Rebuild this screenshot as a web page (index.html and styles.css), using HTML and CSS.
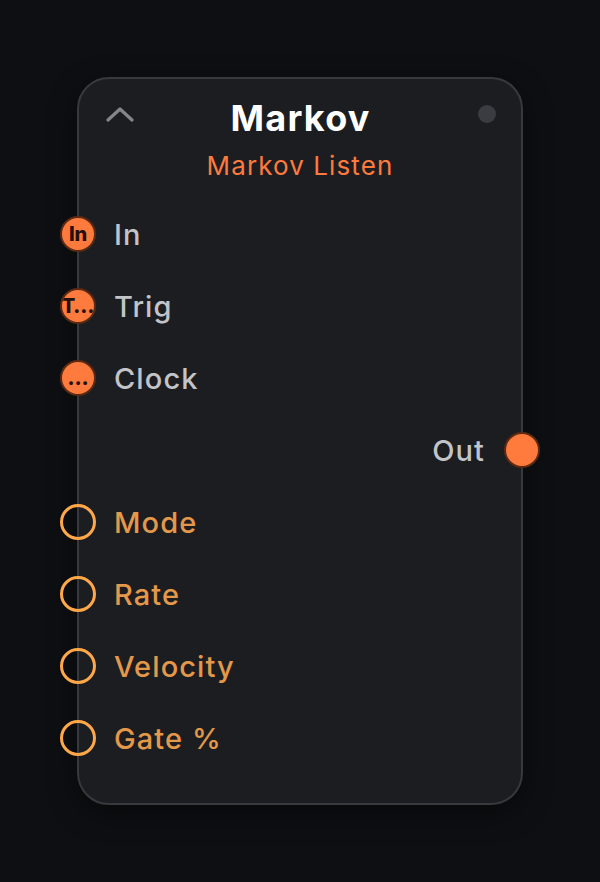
FILE: index.html
```html
<!DOCTYPE html>
<html lang="en">
<head>
  <meta charset="UTF-8" />
  <meta name="viewport" content="width=device-width, initial-scale=1.0" />
  <title>Markov</title>
  <link rel="stylesheet" href="styles.css">
</head>
<body>
  <div class="node">
    <div class="node-head">
      <span class="collapse">
        <svg width="28" height="16" viewBox="0 0 28 16">
          <polyline points="2,13 14,2 26,13" fill="none" stroke="#85868b" stroke-width="3.2" stroke-linecap="round" stroke-linejoin="round" />
        </svg>
      </span>
      <h1 class="title">Markov</h1>
      <span class="status"></span>
    </div>
    <div class="subtitle">Markov Listen</div>

    <div class="ports">
      <div class="row">
        <span class="port in">In</span>
        <span class="label">In</span>
      </div>
      <div class="row">
        <span class="port in">T…</span>
        <span class="label">Trig</span>
      </div>
      <div class="row">
        <span class="port in">…</span>
        <span class="label">Clock</span>
      </div>
      <div class="row out">
        <span class="label">Out</span>
        <span class="port output"></span>
      </div>
      <div class="row">
        <span class="port param"></span>
        <span class="label param-label">Mode</span>
      </div>
      <div class="row">
        <span class="port param"></span>
        <span class="label param-label">Rate</span>
      </div>
      <div class="row">
        <span class="port param"></span>
        <span class="label param-label">Velocity</span>
      </div>
      <div class="row">
        <span class="port param"></span>
        <span class="label param-label">Gate %</span>
      </div>
    </div>
  </div>
</body>
</html>
```

FILE: styles.css
```css
body {
  margin: 0;
  padding: 77px 0 0 77px;
  background-color: #0e0f12;
  font-family: Inter, "Noto Sans", sans-serif;
  height: 882px;
  box-sizing: border-box;
  overflow: hidden;
}
.node {
  width: 446px;
  height: 728px;
  box-sizing: border-box;
  background-color: #1c1d21;
  border: 2px solid #38393e;
  border-radius: 32px;
  box-shadow: 0 8px 30px rgba(0, 0, 0, 0.45);
  padding-top: 17px;
}
.node-head {
  display: grid;
  grid-template-columns: 1fr auto 1fr;
  align-items: center;
  height: 44px;
}
.collapse {
  padding-left: 27px;
  display: flex;
  align-items: center;
  margin-top: -6px;
}
.title {
  margin: 0;
  font-size: 36px;
  line-height: 44px;
  font-weight: 700;
  color: #ffffff;
  letter-spacing: 1.2px;
  margin-right: -1.2px;
}
.status {
  justify-self: end;
  width: 18px;
  height: 18px;
  border-radius: 50%;
  background-color: #3b3c41;
  margin-right: 25px;
  margin-top: -8px;
}
.subtitle {
  text-align: center;
  margin-top: 10px;
  font-size: 26px;
  line-height: 32px;
  color: #ff7a3d;
  letter-spacing: 1.1px;
}
.ports {
  margin-top: 16px;
}
.row {
  display: flex;
  align-items: center;
  height: 72px;
  gap: 18px;
}
.row.out {
  justify-content: flex-end;
  gap: 19px;
}
.label {
  font-size: 29px;
  font-weight: 500;
  color: #c3c4c8;
  letter-spacing: 1.1px;
}
.param-label {
  color: #e3984a;
}
.port {
  width: 36px;
  height: 36px;
  box-sizing: border-box;
  border-radius: 50%;
  margin-left: -19px;
  display: flex;
  align-items: center;
  justify-content: center;
  flex-shrink: 0;
}
.port.in {
  background-color: #ff7a3d;
  border: 2px solid #5c2a12;
  color: #24100a;
  font-size: 20px;
  font-weight: 800;
  overflow: hidden;
  white-space: nowrap;
  letter-spacing: -0.3px;
}
.port.output {
  margin-left: 0;
  margin-right: -19px;
  background-color: #ff7a3d;
  border: 2px solid #5c2a12;
}
.port.param {
  border: 3.5px solid #ffa84a;
  background-color: transparent;
}
```
